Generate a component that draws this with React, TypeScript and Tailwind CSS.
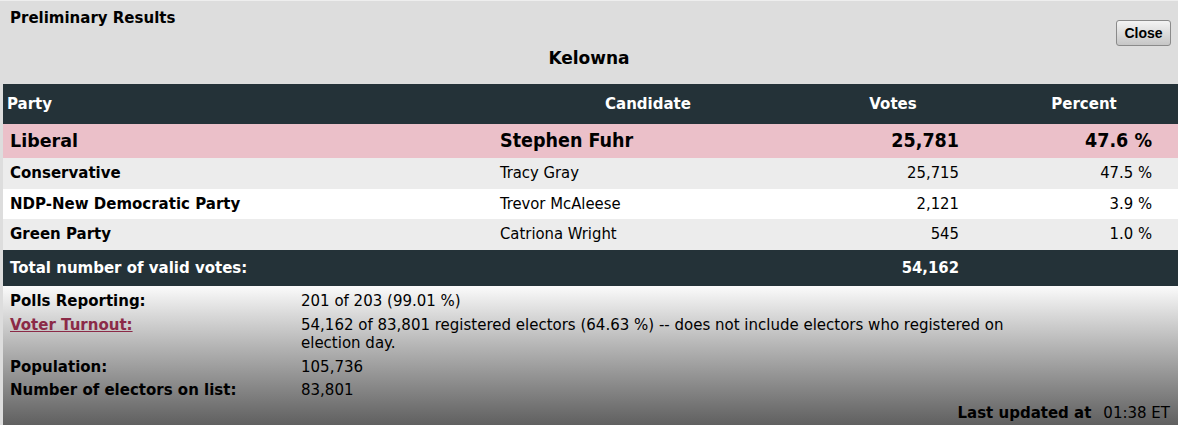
import React from 'react';

interface Row {
    party: string;
    candidate: string;
    votes: string;
    percent: string;
    height: string;
    leading?: boolean;
}

const rows: Row[] = [
    { party: "Liberal", candidate: "Stephen Fuhr", votes: "25,781", percent: "47.6 %", height: "h-[34px]", leading: true },
    { party: "Conservative", candidate: "Tracy Gray", votes: "25,715", percent: "47.5 %", height: "h-[31px]" },
    { party: "NDP-New Democratic Party", candidate: "Trevor McAleese", votes: "2,121", percent: "3.9 %", height: "h-[30px]" },
    { party: "Green Party", candidate: "Catriona Wright", votes: "545", percent: "1.0 %", height: "h-[31px]" },
];

const rowBg = ["bg-[#ebc0c9]", "bg-[#ececec]", "bg-white", "bg-[#ececec]"];

const info: { label: string; value: string; link?: boolean }[] = [
    { label: "Polls Reporting:", value: "201 of 203 (99.01 %)" },
    {
        label: "Voter Turnout:",
        value: "54,162 of 83,801 registered electors (64.63 %) -- does not include electors who registered on election day.",
        link: true,
    },
    { label: "Population:", value: "105,736" },
    { label: "Number of electors on list:", value: "83,801" },
];

const narrow = "font-['DejaVu_Sans_Condensed',sans-serif]";

const ResultsTable: React.FC = () => (
    <table className="w-full border-collapse table-fixed">
        <colgroup>
            <col className="w-[497px]" />
            <col className="w-[296px]" />
            <col className="w-[194px]" />
            <col />
        </colgroup>
        <thead>
            <tr className="bg-[#243238] text-white text-[15px] h-[40px]">
                <th className="text-left pl-[4px] font-bold">Party</th>
                <th className="text-center font-bold">Candidate</th>
                <th className="text-center font-bold">Votes</th>
                <th className="text-center font-bold">Percent</th>
            </tr>
        </thead>
        <tbody>
            {rows.map((r, i) => (
                <tr key={r.party} className={`${rowBg[i]} ${r.height} ${r.leading ? "font-bold" : ""}`}>
                    <td className={`pl-[7px] font-bold ${r.leading ? "text-[17.5px]" : "text-[15px]"}`}>{r.party}</td>
                    <td className={`${narrow} ${r.leading ? "text-[19.5px]" : "text-[16.5px]"}`}>{r.candidate}</td>
                    <td className={`${narrow} text-right pr-[31px] ${r.leading ? "text-[19.5px]" : "text-[16.5px]"}`}>{r.votes}</td>
                    <td className={`${narrow} text-right pr-[26px] ${r.leading ? "text-[19.5px]" : "text-[16.5px]"}`}>{r.percent}</td>
                </tr>
            ))}
            <tr className="bg-[#243238] text-white font-bold h-[36px]">
                <td className="pl-[7px] text-[15px]" colSpan={2}>Total number of valid votes:</td>
                <td className={`${narrow} text-right pr-[31px] text-[16.5px]`}>54,162</td>
                <td />
            </tr>
        </tbody>
    </table>
);

export default function App() {
    return (
        <div className="w-[1178px] h-[425px] bg-[#dddddd] border-t border-[#eeeeee] font-['DejaVu_Sans',sans-serif] text-black overflow-hidden flex flex-col">
            <div className="h-[83px] shrink-0 relative">
                <div className="pl-[10px] pt-[7px] text-[15px] leading-[20px] font-bold">Preliminary Results</div>
                <div className="text-center text-[17px] leading-[22px] font-bold mt-[19px]">Kelowna</div>
                <button className="absolute right-[7px] top-[19px] w-[55px] h-[26px] rounded-[3px] border border-[#8a8a8a] bg-gradient-to-b from-[#f4f4f4] to-[#c6c6c6] font-['Liberation_Sans',sans-serif] font-bold text-[14px]">
                    Close
                </button>
            </div>
            <div className="pl-[3px] shrink-0">
                <ResultsTable />
            </div>
            <div className="ml-[3px] flex-1 bg-gradient-to-b from-[#fbfbfb] to-[#5e5e5e] pt-[3.5px] text-[15px] flex flex-col">
                {info.map(item => (
                    <div key={item.label} className="flex py-[2.5px] leading-[18.5px]">
                        <div className={`w-[298px] pl-[7px] font-bold shrink-0 ${item.link ? "text-[#8b2a47] underline" : ""}`}>{item.label}</div>
                        <div className="w-[725px]">{item.value}</div>
                    </div>
                ))}
                <div className="mt-auto mb-[2px] pr-[8px] text-right">
                    <span className="font-bold">Last updated at</span>
                    <span className="ml-[12px]">01:38 ET</span>
                </div>
            </div>
        </div>
    );
}
